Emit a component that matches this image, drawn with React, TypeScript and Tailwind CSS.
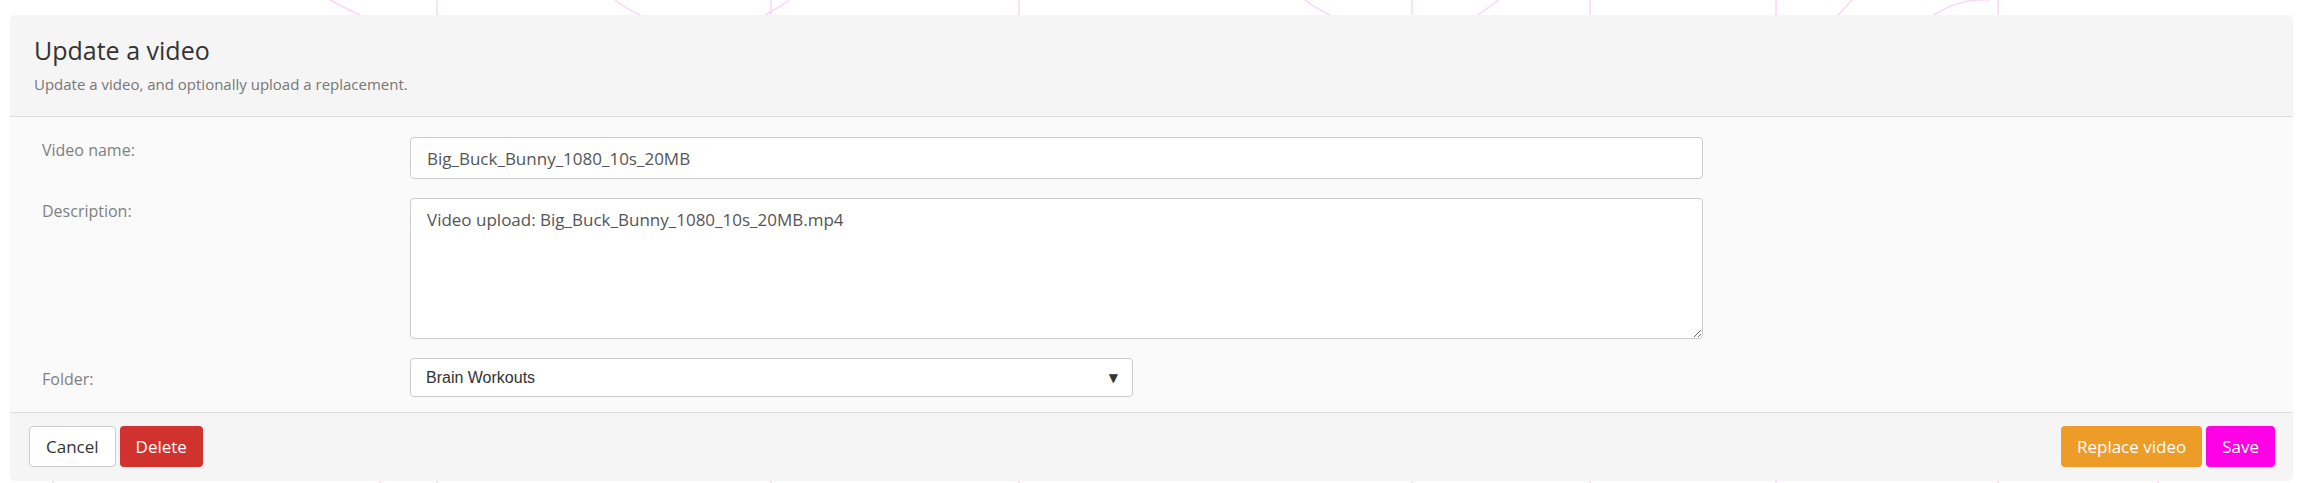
const sans = { fontFamily: '"Open Sans", "Noto Sans", sans-serif' };

export default function App() {
    return (
        <div className="relative min-h-[483px] w-[2307px] bg-white overflow-hidden" style={sans}>
            {/* faint decorative background */}
            <BackgroundPattern />

            <div className="relative ml-[10px] mr-[14px] mt-[15px] mb-[2px] rounded-[5px] overflow-hidden">
                {/* Header */}
                <div className="bg-[#f5f5f5] border-b border-[#dddddd] px-6 pt-[22px] pb-[22px]">
                    <h1 className="text-[25px] leading-[27px] text-[#333333] font-normal">Update a video</h1>
                    <p className="mt-[10px] text-[15px] leading-[20px] text-[#777777]">
                        Update a video, and optionally upload a replacement.
                    </p>
                </div>

                {/* Form body */}
                <div className="bg-[#fafafa] border-b border-[#dddddd] pl-8 pt-[20px] pb-[15px] flex flex-col gap-[19px]">
                    <FormRow label="Video name:">
                        <input
                            readOnly
                            value="Big_Buck_Bunny_1080_10s_20MB"
                            className="w-[1293px] h-[42px] rounded-[4px] border border-[#cccccc] bg-white px-4 text-[17px] text-[#555555] outline-none"
                            style={sans}
                        />
                    </FormRow>
                    <FormRow label="Description:">
                        <textarea
                            readOnly
                            value="Video upload: Big_Buck_Bunny_1080_10s_20MB.mp4"
                            className="block w-[1293px] h-[141px] rounded-[4px] border border-[#cccccc] bg-white px-4 py-[9px] text-[17px] leading-[24px] text-[#555555] outline-none"
                            style={sans}
                        />
                    </FormRow>
                    <FormRow label="Folder:" labelPad="pt-[10px]">
                        <div className="w-[723px] h-[39px] rounded-[4px] border border-[#cccccc] bg-white flex items-center pl-[15px] pr-[14px]">
                            <span
                                className="flex-1 text-[16px] text-[#333333]"
                                style={{ fontFamily: '"Liberation Sans", Arial, sans-serif' }}
                            >
                                Brain Workouts
                            </span>
                            <span className="text-[12px] text-[#333333]" style={{ fontFamily: '"DejaVu Sans", sans-serif' }}>
                                ▼
                            </span>
                        </div>
                    </FormRow>
                </div>

                {/* Footer */}
                <div className="bg-[#f5f5f5] pl-[19px] pr-[18px] pt-[13px] pb-[14px] flex items-center justify-between">
                    <div className="flex gap-1">
                        <Button className="bg-white border border-[#cccccc] text-[#333333]">Cancel</Button>
                        <Button className="bg-[#d2322d] text-white">Delete</Button>
                    </div>
                    <div className="flex gap-1">
                        <Button className="bg-[#ed9c28] text-white">Replace video</Button>
                        <Button className="bg-[#ff00e6] text-white">Save</Button>
                    </div>
                </div>
            </div>
        </div>
    );
}

/* ─── Components ─── */

function FormRow({
    label,
    labelPad = 'pt-[2px]',
    children,
}: {
    label: string;
    labelPad?: string;
    children: React.ReactNode;
}) {
    return (
        <div className="flex items-start">
            <label className={`w-[368px] shrink-0 text-[16px] leading-[22px] text-[#808080] ${labelPad}`}>{label}</label>
            {children}
        </div>
    );
}

function Button({ className, children }: { className: string; children: React.ReactNode }) {
    return (
        <button
            className={`h-[41px] rounded-[4px] px-4 text-[17px] leading-[23px] ${className}`}
            style={sans}
        >
            {children}
        </button>
    );
}

function BackgroundPattern() {
    const verticals = [437, 771, 1019, 1412, 1590, 1776, 1998];
    return (
        <svg className="absolute inset-0 pointer-events-none" width="2307" height="483">
            <g fill="none" stroke="#f9d6f7" strokeWidth="1.5">
                {verticals.map((x) => (
                    <line key={x} x1={x} y1={0} x2={x} y2={483} />
                ))}
                <path d="M330 0 Q 345 8 360 15" />
                <path d="M615 0 Q 625 8 640 15" />
                <path d="M790 0 Q 778 8 765 15" />
                <path d="M1305 0 Q 1315 8 1330 15" />
                <path d="M1499 0 Q 1488 8 1478 15" />
                <path d="M1852 0 Q 1845 8 1838 15" />
                <path d="M1934 15 Q 1960 -2 1990 0" />
                <line x1={53} y1={478} x2={53} y2={483} />
                <line x1={380} y1={478} x2={380} y2={483} />
                <line x1={2158} y1={478} x2={2158} y2={483} />
            </g>
        </svg>
    );
}
